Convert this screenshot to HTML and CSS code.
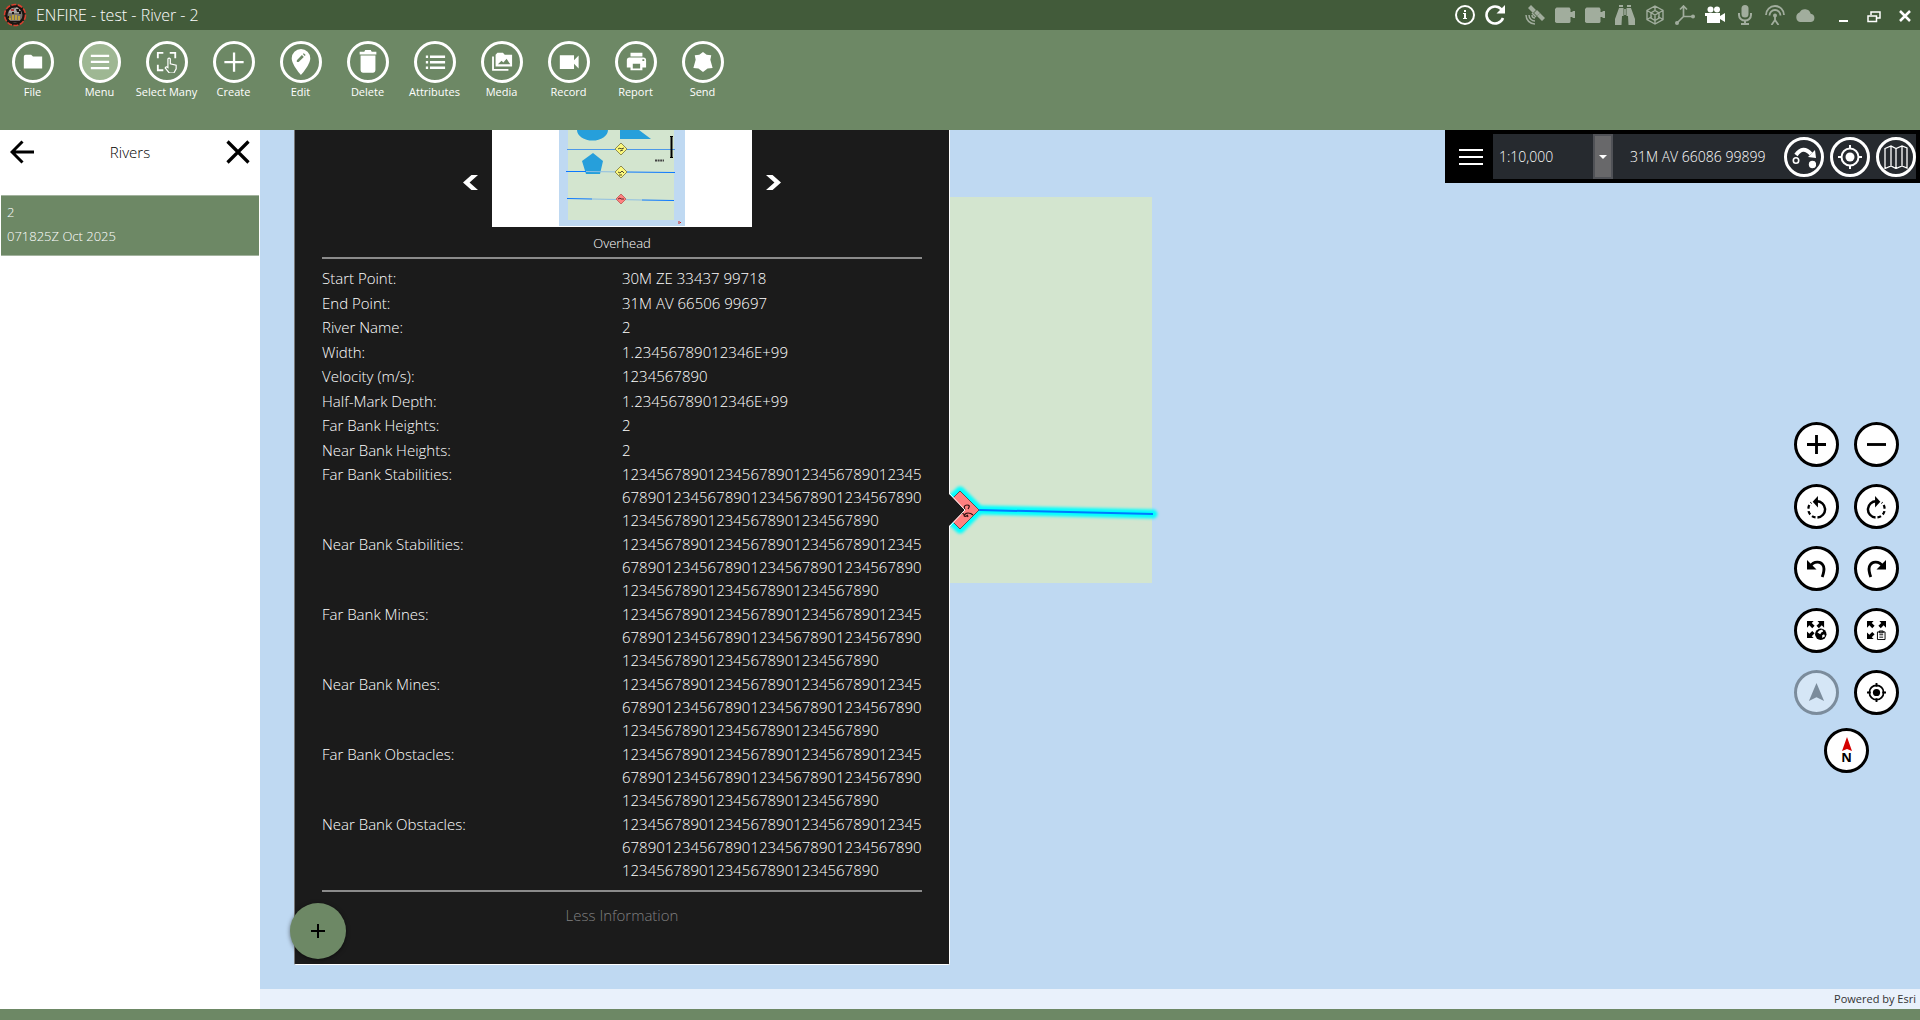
FILE: index.html
```html
<!DOCTYPE html>
<html lang="en">
<head>
<meta charset="utf-8">
<title>ENFIRE - test - River - 2</title>
<link rel="stylesheet" href="styles.css">
</head>
<body>
<div class="app">
  <header class="titlebar">
    <svg class="app-logo" viewBox="0 0 24 24" aria-hidden="true">
      <circle cx="12" cy="12" r="10.500" fill="#1a1512" stroke="#d8402f" stroke-width="1.6" stroke-dasharray="5 1.5"/>
      <circle cx="12" cy="12" r="7.500" fill="#77726d"/>
      <path d="M6 8l3-3 2 1 3-2 3 3 1 3H6z" fill="#a9a6a4"/>
      <path d="M13 6h3v3h-2zM16 8h2v3h-2zM5 13h3v2H5zM9 9h2v2H9zM7 18h10v1H7z" fill="#181412"/>
      <path d="M7 13v4M10 12v5M13 12v5M16 13v4" fill="none" stroke="#d9b52c" stroke-width="1.400"/>
      <path d="M8 6h3v2H8z" fill="#b03535"/>
    </svg>
    <h1 class="app-title">ENFIRE - test - River - 2</h1>
    <div class="status">
      <button class="status-btn" aria-label="Information"><svg viewBox="0 0 20 20"><circle cx="10" cy="10" r="9" fill="none" stroke="currentColor" stroke-width="2"/><path d="M9 5h2v2H9zM8 8h3v5h1v1H8v-1h1V9H8z"/></svg></button>
      <button class="status-btn" aria-label="Refresh"><svg viewBox="0 0 20 20"><path d="M16.500 4.500A8.500 8.500 0 1 0 18 13" fill="none" stroke="currentColor" stroke-width="2.600"/><path d="M20 0v8.500h-8.500z"/></svg></button>
      <span class="status-icons">
        <svg viewBox="0 0 20 20"><path d="M3 3l3-3 5 5-3 3zM12 11l3-3 5 5-3 3z"/><path d="M9 8l3-3 3 3-3 3z"/><path d="M7 8l4 4M1 10a9 9 0 0 0 9 9M4 10a6 6 0 0 0 6 6M7 10a3 3 0 0 0 3 3" fill="none" stroke="currentColor" stroke-width="1.500"/></svg>
        <svg viewBox="0 0 20 20"><path d="M1.500 2.500h13L15.500 4v3h2V6H20v7h-2.500v-1h-2v5l-1 1h-13L0 17V4z"/></svg>
        <svg viewBox="0 0 20 20"><path d="M1.500 2.500h13L15.500 4v3h2V6H20v7h-2.500v-1h-2v5l-1 1h-13L0 17V4z"/></svg>
        <svg viewBox="0 0 20 20"><path d="M4 0h4v2H4zM12 0h4v2h-4zM4 3h4.500v8H7l-.5 9H0v-6zM11.500 3H16l4 11v6h-6.500l-.5-9h-1.500zM9.200 4h1.600v6H9.200z"/></svg>
        <svg viewBox="0 0 20 20"><path d="M10 1l8 4.500v9L10 19l-8-4.500v-9zM2 5.500l8 4.500 8-4.500M10 10v9M10 1v5M2 14.500l5-3M18 14.500l-5-3M6 8v5l4 2.500 4-2.500V8l-4-2.500z" fill="none" stroke="currentColor" stroke-width="1.400"/></svg>
        <svg viewBox="0 0 20 20"><path d="M8.500 2v9.500M8.500 11.500H18M8.500 11.500L2 18M5 4.500L8.500 1 12 4.500" fill="none" stroke="currentColor" stroke-width="1.700"/><circle cx="18" cy="11.500" r="2"/><circle cx="2" cy="18" r="2"/></svg>
        <svg class="on" viewBox="0 0 20 20"><circle cx="5.500" cy="4.500" r="3"/><circle cx="12" cy="4.500" r="3"/><path d="M0 8h15v3l5-3v9l-5-3v4H2v-7H0z"/></svg>
        <svg viewBox="0 0 20 20"><rect x="6.500" y="0" width="7" height="12.500" rx="3.500"/><path d="M4 8v2a6 5.500 0 0 0 12 0V8" fill="none" stroke="currentColor" stroke-width="2"/><path d="M9 15h2v3h3v2H6v-2h3z"/></svg>
        <svg viewBox="0 0 20 20"><path d="M1 10a9 9 0 0 1 18 0M4.500 10.500a5.500 5.500 0 0 1 11 0" fill="none" stroke="currentColor" stroke-width="1.800"/><circle cx="10" cy="10.500" r="2"/><path d="M10 12v4M10 15l-3.500 5M10 15l3.500 5" fill="none" stroke="currentColor" stroke-width="1.800"/></svg>
        <svg viewBox="0 0 20 20"><path d="M5 17a5 5 0 0 1-.5-9.500 6 6 0 0 1 11.200 1.200A4.200 4.200 0 0 1 16 17z"/></svg>
      </span>
      <span class="window-controls">
        <button class="win-btn" aria-label="Minimize"><svg viewBox="0 0 16 16"><path d="M4 12h9v2H4z"/></svg></button>
        <button class="win-btn" aria-label="Restore"><svg viewBox="0 0 16 16"><path d="M5 7V4h9v6h-3M2 8h8.500v5.500H2z" fill="none" stroke="currentColor" stroke-width="1.500"/></svg></button>
        <button class="win-btn" aria-label="Close"><svg viewBox="0 0 16 16"><path d="M3 3l10 10M13 3L3 13" fill="none" stroke="currentColor" stroke-width="2.500"/></svg></button>
      </span>
    </div>
  </header>

  <nav class="toolbar" aria-label="Main">
    <button class="tool"><span class="ring"><svg viewBox="0 0 24 24"><path d="M10 4H4a2 2 0 0 0-2 2v13h20V6h-10z"/></svg></span>File</button>
    <button class="tool"><span class="ring active"><svg viewBox="0 0 24 24"><path d="M2 4h20v2.500H2zM2 10.700h20v2.500H2zM2 17.400h20v2.500H2z"/></svg></span>Menu</button>
    <button class="tool"><span class="ring"><svg viewBox="0 0 24 24"><path d="M2 8V2h6M15 2h6v6M2 15v6h6" fill="none" stroke="currentColor" stroke-width="2"/><path d="M13 17V8.500q1.300-1.500 2.600 0V14l6.400 1.500v4L19.500 24h-5L10 18.500q1-2 3-.5z" fill="none" stroke="currentColor" stroke-width="1.300"/></svg></span>Select Many</button>
    <button class="tool"><span class="ring"><svg viewBox="0 0 24 24"><path d="M10.800 1.500h2.500v9.300h9.200v2.500h-9.200v9.200h-2.500v-9.200H1.500v-2.500h9.300z"/></svg></span>Create</button>
    <button class="tool"><span class="ring"><svg class="big" viewBox="0 0 28 28"><path fill-rule="evenodd" d="M14 0a10 10 0 0 0-10 10c0 7 10 18 10 18s10-11 10-18A10 10 0 0 0 14 0zM9.500 12l5.500-5.500 2 2-5.500 5.500h-2zM16 5.500l1-1 2 2-1 1z"/></svg></span>Edit</button>
    <button class="tool"><span class="ring"><svg class="big" viewBox="0 0 28 28"><path d="M5 3h5l1-2h6l1 2h5v3H5zM6 7h16v16a2.500 2.500 0 0 1-2.500 2.500h-11A2.500 2.500 0 0 1 6 23z"/></svg></span>Delete</button>
    <button class="tool"><span class="ring"><svg viewBox="0 0 24 24"><path d="M2 5h2.500v2.500H2zM2 11h2.500v2.500H2zM2 17h2.500v2.500H2zM6.500 5H23v2.500H6.500zM6.500 11H23v2.500H6.500zM6.500 17H23v2.500H6.500z"/></svg></span>Attributes</button>
    <button class="tool"><span class="ring"><svg viewBox="0 0 24 24"><path fill-rule="evenodd" d="M7 2h6l2 2h8v13H5V4zM7.500 14.500H21l-4-6-3.500 4-2-2z"/><path d="M2.200 6v14.500H19" fill="none" stroke="currentColor" stroke-width="2"/></svg></span>Media</button>
    <button class="tool"><span class="ring"><svg viewBox="0 0 24 24"><path d="M2 4.500h15.500V10L22.500 5v14l-5-5v5.500H2z"/></svg></span>Record</button>
    <button class="tool"><span class="ring"><svg viewBox="0 0 24 24"><path fill-rule="evenodd" d="M6 2h13v4H6zM5 7h15q3 0 3 3v8h-4v3H6v-3H2v-8q0-3 3-3zM8.500 14v5h8v-5zM19 9h2v2h-2z"/></svg></span>Report</button>
    <button class="tool"><span class="ring"><svg viewBox="0 0 24 24"><path d="M12 1l4 3 5 .5-1 5 2.500 9-5.500.5-5 4-5-4-5.500-.5L4 9.500l-1-5L8 4z"/></svg></span>Send</button>
  </nav>

  <main class="workspace">
    <aside class="sidebar">
      <div class="sidebar-head">
        <button class="plain" aria-label="Back"><svg viewBox="0 0 24 24"><path d="M24 12H2M12.500 1.500L2 12l10.500 10.500" fill="none" stroke="currentColor" stroke-width="3"/></svg></button>
        <h2 class="sidebar-title">Rivers</h2>
        <button class="plain" aria-label="Close"><svg viewBox="0 0 24 24"><path d="M1.500 1.500l21 21M22.500 1.500l-21 21" fill="none" stroke="currentColor" stroke-width="3.200"/></svg></button>
      </div>
      <button class="river"><span>2</span><span>071825Z Oct 2025</span></button>
    </aside>

    <section class="map" aria-label="Map">
      <svg class="map-canvas" aria-hidden="true">
        <defs><filter id="glow" x="-20%" y="-20%" width="140%" height="140%"><feGaussianBlur stdDeviation="1.500"/></filter></defs>
        <rect x="300" y="67" width="592" height="386" fill="#d3e5cf"/>
        <g filter="url(#glow)" fill="none" stroke="#00ffff" stroke-linejoin="round" stroke-linecap="round">
          <path d="M719 380L893 384" stroke-width="9"/>
          <path d="M680 380L700 361 719 380 700 399z" stroke-width="9"/>
        </g>
        <path d="M719 380L893 384" stroke="#007aff" stroke-width="2"/>
        <path d="M681 380L700 361 719 380 700 399z" fill="#ff8080" stroke="#555"/>
        <path d="M705 380q-2-5 2-5t1 4M699 385q5-3 5 0t4 0M704 386q1-3 4-3t5 2M707 385l1 2" fill="none" stroke="#301010" stroke-width="1.200"/>
      </svg>

      <article class="popup">
        <div class="media">
          <button class="arrow" aria-label="Previous"><svg viewBox="0 0 16 16"><path d="M16 0L7 8l9 8h-7L0 8l9-8z"/></svg></button>
          <svg class="preview" viewBox="0 0 260 97" role="img" aria-label="Overhead">
            <rect width="260" height="97" fill="#fff"/>
            <rect x="67" width="126" height="96" fill="#bfd9f2"/>
            <rect x="76" width="106" height="90" fill="#d3e5cf"/>
            <path d="M85 0a15.500 10.500 0 0 0 31 0zM128 0h19l12 9h-31zM101 23l10 8-3 13H94l-4-13z" fill="#269fdb"/>
            <path d="M75 19.500h108" stroke="#4d98e8"/>
            <path d="M74 41.500h20M133 42l50 .5M75 68.500l25 .5M150 70l32 .5" stroke="#0b78ff"/>
            <path d="M94 41.500l39 .5M100 69l50 1" stroke="#8fbfe3"/>
            <path d="M129 13l6 6-6 6-6-6zM129 36l6 6-6 6-6-6z" fill="#fbf87c" stroke="#8d8b52"/>
            <path d="M126 19l2-1 1 1 3-1M128 21l3-1M126 42l2 1 2-2 2 2M127 45h3" fill="none" stroke="#4d4c2b"/>
            <path d="M129 64l5 5-5 5-5-5z" fill="#ff8080" stroke="#c56b64"/>
            <path d="M126 69l2-1 1 1h3" fill="none" stroke="#602a2a"/>
            <path d="M178 6.500h3M178 27.500h3" stroke="#000"/><path d="M179.500 6v21" stroke="#000" stroke-width="2"/>
            <path d="M163 30.500h9" stroke="#444" stroke-width="2" stroke-dasharray="2 .6"/>
            <path d="M187 91v3M188 92.500h1" stroke="#d02020"/>
          </svg>
          <button class="arrow" aria-label="Next"><svg viewBox="0 0 16 16"><path d="M0 0l9 8-9 8h7l9-8-9-8z"/></svg></button>
        </div>
        <p class="caption">Overhead</p>
        <dl class="facts">
          <div class="fact"><dt>Start Point:</dt><dd>30M ZE 33437 99718</dd></div>
          <div class="fact"><dt>End Point:</dt><dd>31M AV 66506 99697</dd></div>
          <div class="fact"><dt>River Name:</dt><dd>2</dd></div>
          <div class="fact"><dt>Width:</dt><dd>1.23456789012346E+99</dd></div>
          <div class="fact"><dt>Velocity (m/s):</dt><dd>1234567890</dd></div>
          <div class="fact"><dt>Half-Mark Depth:</dt><dd>1.23456789012346E+99</dd></div>
          <div class="fact"><dt>Far Bank Heights:</dt><dd>2</dd></div>
          <div class="fact"><dt>Near Bank Heights:</dt><dd>2</dd></div>
        </dl>
        <dl class="notes">
          <div class="fact"><dt>Far Bank Stabilities:</dt><dd>12345678901234567890123456789012345<br>67890123456789012345678901234567890<br>123456789012345678901234567890</dd></div>
          <div class="fact"><dt>Near Bank Stabilities:</dt><dd>12345678901234567890123456789012345<br>67890123456789012345678901234567890<br>123456789012345678901234567890</dd></div>
          <div class="fact"><dt>Far Bank Mines:</dt><dd>12345678901234567890123456789012345<br>67890123456789012345678901234567890<br>123456789012345678901234567890</dd></div>
          <div class="fact"><dt>Near Bank Mines:</dt><dd>12345678901234567890123456789012345<br>67890123456789012345678901234567890<br>123456789012345678901234567890</dd></div>
          <div class="fact"><dt>Far Bank Obstacles:</dt><dd>12345678901234567890123456789012345<br>67890123456789012345678901234567890<br>123456789012345678901234567890</dd></div>
          <div class="fact"><dt>Near Bank Obstacles:</dt><dd>12345678901234567890123456789012345<br>67890123456789012345678901234567890<br>123456789012345678901234567890</dd></div>
        </dl>
        <button class="less">Less Information</button>
        <svg class="pointer" viewBox="0 0 17 34" aria-hidden="true"><path d="M0 1l16 16L0 33z" fill="#1b1b1b"/><path d="M1 1l15 16L1 33" fill="none" stroke="#fff"/></svg>
      </article>
      <button class="fab" aria-label="Add"><svg viewBox="0 0 14 14"><path d="M7 0v14M0 7h14" stroke="currentColor" stroke-width="2"/></svg></button>

      <div class="mapbar">
        <button class="burger" aria-label="Map menu"><svg viewBox="0 0 24 18"><path d="M0 1h24v2H0zM0 8h24v2H0zM0 15h24v2H0z"/></svg></button>
        <div class="scale">
          <select class="scale-select" aria-label="Map scale"><option>1:10,000</option></select>
          <span class="scale-arrow"><svg viewBox="0 0 8 4"><path d="M0 0h8L4 4z"/></svg></span>
        </div>
        <span class="coords">31M AV 66086 99899</span>
        <div class="bar-buttons">
          <button class="ring-btn" aria-label="Measure"><svg viewBox="0 0 24 24"><circle cx="4" cy="15.500" r="2.700" fill="none" stroke="currentColor" stroke-width="1.600"/><path d="M4 10Q11 0 19 9" fill="none" stroke="currentColor" stroke-width="4"/><path d="M23 5l1 8-8-1z"/><circle cx="20.500" cy="19.500" r="3.700"/></svg></button>
          <button class="ring-btn" aria-label="Center"><svg viewBox="0 0 24 24"><circle cx="12" cy="12" r="8.500" fill="none" stroke="currentColor" stroke-width="2"/><circle cx="12" cy="12" r="4.500"/><path d="M11 0h2v4h-2zM11 20h2v4h-2zM0 11h4v2H0zM20 11h4v2h-4z"/></svg></button>
          <button class="ring-btn" aria-label="Basemap"><svg viewBox="0 0 24 24"><path d="M1 3.500l6-2.500 5 2.500L18 1l5 2v20l-5-2-6 2.500L7 21l-6 2.500zM7 1v20M12 3.500v20M18 1v20" fill="none" stroke="currentColor" stroke-width="1.300"/></svg></button>
        </div>
      </div>

      <div class="nav">
        <div class="nav-grid">
          <button class="nav-btn" aria-label="Zoom in"><svg viewBox="0 0 20 20"><path d="M8.500 0h3v8.500H20v3h-8.500V20h-3v-8.500H0v-3h8.500z"/></svg></button>
          <button class="nav-btn" aria-label="Zoom out"><svg viewBox="0 0 20 20"><path d="M0 8.500h20v3H0z"/></svg></button>
          <button class="nav-btn" aria-label="Rotate left"><svg viewBox="0 0 20 20"><path d="M6 5l5.500-6v12z"/><path d="M10 4.500a8.500 8.500 0 0 1 1 17" fill="none" stroke="currentColor" stroke-width="2.600"/><path d="M9 21.500A8.500 8.500 0 0 1 1.500 12a8 8 0 0 1 3-6" fill="none" stroke="currentColor" stroke-width="2.400" stroke-dasharray="4 2.500"/></svg></button>
          <button class="nav-btn" aria-label="Rotate right"><svg viewBox="0 0 20 20"><path d="M14 5L8.500-1v12z"/><path d="M10 4.500a8.500 8.500 0 0 0-1 17" fill="none" stroke="currentColor" stroke-width="2.600"/><path d="M11 21.500A8.500 8.500 0 0 0 18.500 12a8 8 0 0 0-3-6" fill="none" stroke="currentColor" stroke-width="2.400" stroke-dasharray="4 2.500"/></svg></button>
          <button class="nav-btn" aria-label="Undo"><svg viewBox="0 0 20 20"><path d="M0 1v10h10z"/><path d="M3 8C7 2 15 1.500 17.500 8c1 3.500 0 7-1.500 11" fill="none" stroke="currentColor" stroke-width="3"/></svg></button>
          <button class="nav-btn" aria-label="Redo"><svg viewBox="0 0 20 20"><path d="M20 1v10H10z"/><path d="M17 8C13 2 5 1.500 2.500 8c-1 3.500 0 7 1.500 11" fill="none" stroke="currentColor" stroke-width="3"/></svg></button>
          <button class="nav-btn" aria-label="Zoom to world"><svg viewBox="0 0 20 20"><path d="M0 0h7L5 2l3 3-2.500 2.500L2.500 4.500 0 7zM18 0h-7l2 2-3 3 2.500 2.500 3-3L18 7zM0 18h7l-2-2 3-3-2.500-2.500-3 3L0 11z"/><circle cx="14.500" cy="14" r="6"/><path d="M13 10l3-1 1 2-2 1-1 2-3-2zM16 15l2-1 1 2-3 2z" fill="#fff"/></svg></button>
          <button class="nav-btn" aria-label="Zoom to layer"><svg viewBox="0 0 20 20"><path d="M0 0h7L5 2l3 3-2.500 2.500L2.500 4.500 0 7zM20 0h-7l2 2-3 3 2.500 2.500 3-3L20 7zM0 19h7l-2-2 3-3-2.500-2.500-3 3L0 12z"/><path d="M11 11.500h8v8h-8zM13 10.500h4v2h-4zM13 14.500h4M13 17h4" fill="none" stroke="currentColor"/></svg></button>
          <button class="nav-btn" aria-label="Follow position" disabled><svg viewBox="0 0 20 20"><path d="M10 0l8 19-8-4-8 4z"/></svg></button>
          <button class="nav-btn" aria-label="Center on location"><svg viewBox="0 0 20 20"><circle cx="10" cy="10" r="7.500" fill="none" stroke="currentColor" stroke-width="1.800"/><circle cx="10" cy="10" r="3.800"/><path d="M9 0h2v4H9zM9 16h2v4H9zM0 9h4v2H0zM16 9h4v2h-4z"/></svg></button>
        </div>
        <button class="nav-btn compass" aria-label="North up"><svg viewBox="0 0 10 14"><path d="M5 0l5 14-5-2-5 2z"/></svg><span>N</span></button>
      </div>

      <div class="attribution">Powered by <a href="#esri">Esri</a></div>
    </section>
  </main>
  <footer class="footer"></footer>
</div>
</body>
</html>
```
FILE: styles.css
```css
* { box-sizing: border-box; }
body { margin: 0; font-family: "Open Sans", "Noto Sans", sans-serif; font-size: 15px; }
button, select { font: inherit; color: inherit; border: 0; padding: 0; margin: 0; background: none; }
svg { display: block; fill: currentColor; }
h1, h2, p, dl, dd { margin: 0; }

.app { display: flex; flex-direction: column; height: 100vh; }

.titlebar { display: flex; align-items: center; height: 30px; padding: 0 7px 0 3px; background: #425b3a; color: #fff; }
.app-logo { width: 24px; height: 24px; }
.app-title { flex: 1; margin-left: 9px; font-size: 16px; font-weight: 350; }
.status { display: flex; align-items: center; gap: 10px; }
.status-btn, .status-btn svg, .status-icons svg { width: 20px; height: 20px; }
.status-icons { display: flex; gap: 10px; margin-left: 10px; color: #a1ad9d; }
.status-icons .on { color: #fff; }
.window-controls { display: flex; gap: 15px; margin-left: 10px; margin-top: 2px; }
.win-btn, .win-btn svg { width: 16px; height: 16px; }

.toolbar { display: flex; height: 100px; padding-top: 11px; background: #6d8865; color: #fff; margin-left: -1px; }
.tool { display: flex; flex-direction: column; align-items: center; width: 67px; height: 60px; gap: 1px; font-size: 11px; line-height: 16px; white-space: nowrap; }
.ring { display: grid; place-items: center; width: 42px; height: 42px; border: 3px solid #fff; border-radius: 50%; }
.ring.active { background: #9eb793; }
.ring svg { width: 22px; height: 22px; }
.ring svg.big { width: 28px; height: 26px; }

.workspace { display: flex; flex: 1; min-height: 0; }
.sidebar { width: 260px; padding: 0 1px; background: #fff; }
.sidebar-head { display: flex; align-items: center; justify-content: space-between; height: 65px; padding: 0 9px 21px; }
.sidebar-title { font-size: 15px; font-weight: 300; }
.plain svg { width: 24px; height: 24px; }
.river { display: flex; flex-direction: column; width: 100%; height: 61px; padding: 4px 6px; background: #6d8865; border: 1px solid #a3b39e; border-width: 1px 0; color: #fff; font-size: 13px; font-weight: 350; line-height: 24px; text-align: left; }

.map { position: relative; flex: 1; overflow: hidden; background: #bfd9f2; }
.map-canvas { position: absolute; inset: 0; width: 100%; height: 100%; }
.attribution { position: absolute; left: 0; right: 0; bottom: 0; height: 20px; padding-right: 4px; background: #e9f1fb; color: #333; font-size: 11px; line-height: 20px; text-align: right; }
.attribution a { color: inherit; text-decoration: none; }

.popup { position: absolute; left: 34px; top: 0; width: 656px; padding: 0 27px 37px; background: #1b1b1b; border: 1px solid #fff; border-top: 0; border-radius: 0 0 2px 2px; border-left-color: #777; color: #fff; font-weight: 350; }
.media { display: flex; justify-content: center; align-items: center; gap: 14px; }
.preview { width: 260px; height: 97px; }
.arrow { padding: 8px 0 0; }
.arrow svg { width: 15px; height: 15px; }
.caption { height: 32px; border-bottom: 2px solid #8b8b8b; font-size: 13px; line-height: 32px; text-align: center; }
.facts { display: grid; align-content: space-between; height: 195px; margin-top: 8px; line-height: 23px; }
.fact { display: grid; grid-template-columns: 1fr 1fr; white-space: nowrap; }
.notes { display: grid; gap: 1px; padding: 1px 0 8px; line-height: 23px; border-bottom: 2px solid #8b8b8b; }
.less { display: block; margin: 11px auto 0; color: #808080; line-height: 24px; }
.pointer { position: absolute; left: 654px; top: 363px; width: 17px; height: 34px; }
.fab { position: absolute; left: 30px; top: 773px; display: grid; place-items: center; width: 56px; height: 56px; border-radius: 50%; background: #6d8865; color: #000; box-shadow: 0 1px 4px rgb(0 0 0 / 50%); }
.fab svg { width: 14px; height: 14px; }

.mapbar { position: absolute; right: 0; top: 0; display: flex; width: 475px; height: 53px; border: 4px solid #000; background: #262a2f; color: #fff; }
.burger { display: grid; place-items: center; width: 44px; background: #000; }
.burger svg { width: 24px; height: 18px; }
.scale { position: relative; width: 120px; }
.scale-select { appearance: none; width: 100%; height: 100%; padding: 0 26px 0 6px; font-size: 14px; font-weight: 350; outline: 0; }
.scale-arrow { position: absolute; right: 0; top: 0; display: grid; place-items: center; width: 20px; height: 100%; border: 2px solid #505257; background: #68686a; pointer-events: none; }
.scale-arrow svg { width: 8px; height: 4px; }
.coords { flex: 1; padding-left: 17px; font-size: 14px; font-weight: 350; line-height: 45px; white-space: nowrap; }
.bar-buttons { display: flex; align-items: center; gap: 6px; }
.ring-btn { display: grid; place-items: center; width: 40px; height: 40px; border: 3px solid #fff; border-radius: 50%; }
.ring-btn svg { width: 24px; height: 24px; }

.nav { position: absolute; right: 21px; top: 292px; display: flex; flex-direction: column; align-items: center; gap: 13px; }
.nav-grid { display: grid; grid-template-columns: 45px 45px; gap: 17px 15px; }
.nav-btn { display: grid; place-items: center; align-content: center; width: 45px; height: 45px; border: 3px solid #000; border-radius: 50%; background: #fff; color: #000; }
.nav-btn svg { width: 19px; height: 19px; overflow: visible; }
.nav-btn:disabled { opacity: .35; }
.nav-btn.compass svg { width: 10px; height: 14px; color: #d40000; }
.compass span { font-size: 13px; font-weight: 700; line-height: 13px; }

.footer { height: 11px; background: #6d8865; }
```
